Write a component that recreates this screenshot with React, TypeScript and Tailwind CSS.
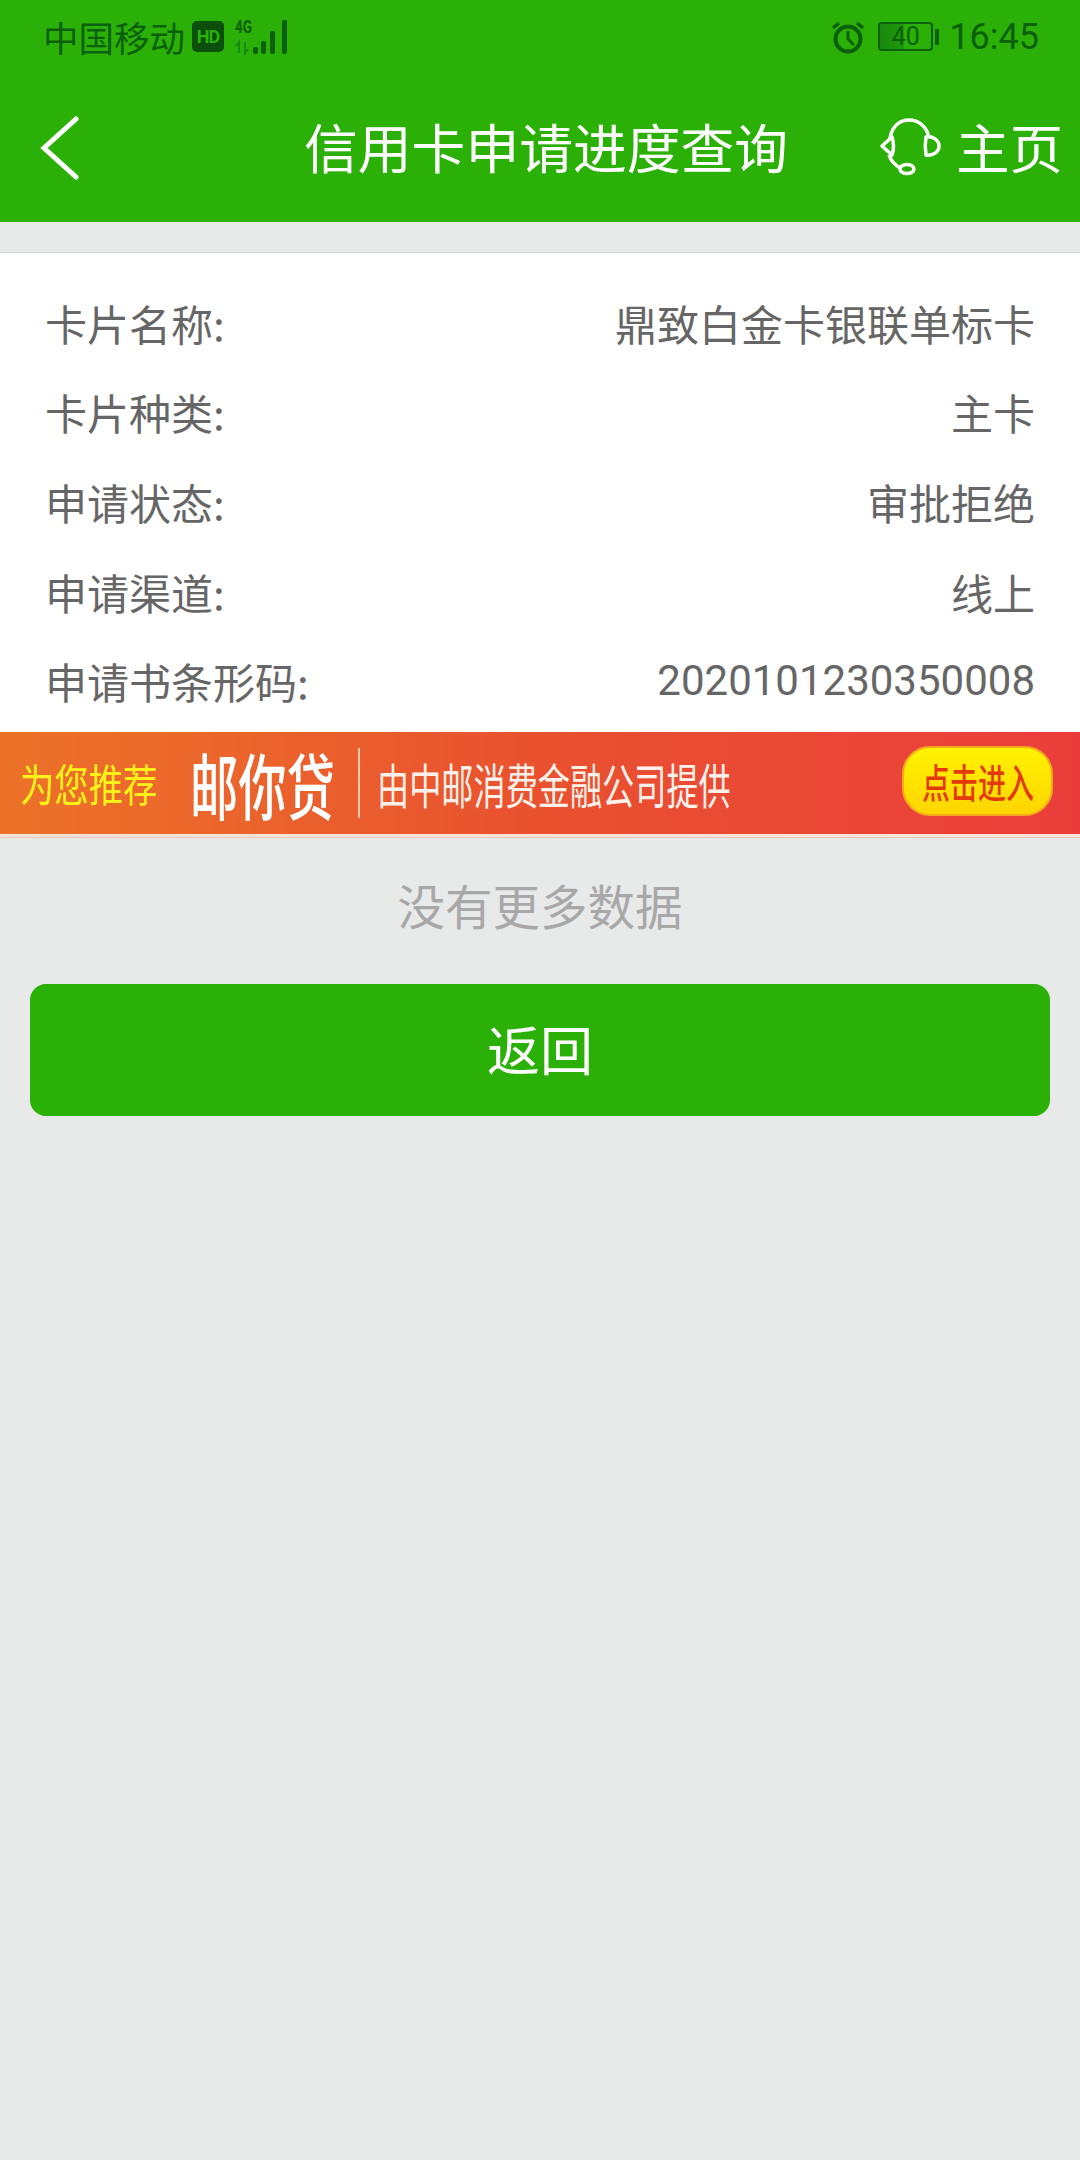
const cjk = "font-['Noto_Sans_CJK_SC','Noto_Sans',sans-serif]";

const rows = [
  ["卡片名称:", "鼎致白金卡银联单标卡"],
  ["卡片种类:", "主卡"],
  ["申请状态:", "审批拒绝"],
  ["申请渠道:", "线上"],
];

function StatusBar() {
  return (
    <div className="flex h-[73px] items-center pl-[43px] pr-[41px] text-[#0b600b]">
      <span className="w-[149px] text-[35.5px] leading-none whitespace-nowrap">中国移动</span>
      <span className="flex h-[31px] w-[32px] items-center justify-center rounded-[5px] bg-[#0c4f0c] text-[18px] leading-none font-bold text-[#2bb007] font-['Roboto',sans-serif] tracking-tighter">
        HD
      </span>
      {/* 4G + signal */}
      <svg className="ml-[10px] overflow-visible" width="54" height="36" viewBox="0 0 54 36" fill="none">
        <text x="1" y="14" fontSize="18" fontWeight="700" fill="#0b600b" fontFamily="Roboto, sans-serif" textLength="17" lengthAdjust="spacingAndGlyphs">4G</text>
        <path d="M5 34V23l-3 4M11 23v11l3-4" stroke="#148a10" strokeWidth="2" />
        <rect x="19" y="28" width="5" height="7" rx="2" fill="#0b600b" />
        <rect x="27" y="22" width="5" height="13" rx="2" fill="#0b600b" />
        <rect x="36" y="12" width="5" height="23" rx="2" fill="#0b600b" />
        <rect x="48" y="1" width="5" height="34" rx="2" fill="#0b600b" />
      </svg>
      <div className="flex-1" />
      {/* alarm */}
      <svg width="34" height="34" viewBox="0 0 34 34" fill="none" stroke="#0b600b" strokeWidth="4">
        <circle cx="17" cy="19" r="12.5" />
        <path d="M17 11v8l6 6" strokeWidth="3" />
        <path d="M2 8l6-5M32 8l-6-5" strokeWidth="3.5" />
      </svg>
      {/* battery */}
      <div className="ml-[13px] flex items-center">
        <div className="relative flex h-[29px] w-[55px] items-center justify-center overflow-hidden rounded-[4px] border-2 border-[#0b600b]">
          <div className="absolute inset-y-0 left-0 w-[24px] bg-gradient-to-r from-[#188a0e] to-[#1e9a0c]" />
          <span className="relative text-[25px] leading-none font-['Roboto',sans-serif]">40</span>
        </div>
        <div className="ml-[2px] h-[16px] w-[4px] rounded-[1px] bg-[#0b600b]" />
      </div>
      <span className="ml-[10px] text-[36px] leading-none font-['Roboto',sans-serif]">16:45</span>
    </div>
  );
}

function NavBar() {
  return (
    <div className="flex h-[149px] items-start pl-[39px] pr-[17px] text-white">
      <svg className="mt-[42px]" width="40" height="66" viewBox="0 0 40 66" fill="none" stroke="#fff" strokeWidth="5" strokeLinecap="round">
        <path d="M37 4 L5 33 L37 62" />
      </svg>
      <span className="ml-[225px] mt-[36px] text-[53.8px] leading-[74px] whitespace-nowrap">信用卡申请进度查询</span>
      <div className="flex-1" />
      {/* headset */}
      <svg className="mt-[44px]" width="62" height="60" viewBox="0 0 62 60" fill="none" stroke="#fff" strokeWidth="3.5" strokeLinejoin="round">
        <path d="M11 21C13 9 21 3 30 3s18 6 20 18" />
        <path d="M13 20 3 29l10 9c2-6 2-12 0-18Z" />
        <path d="M47 20c7-1 13 3 13 9s-6 10-13 9c-1-6-1-12 0-18Z" />
        <path d="M10 38c2 6 6 10 11 13" />
        <ellipse cx="28" cy="52" rx="7" ry="4.5" />
      </svg>
      <span className="ml-[15px] mt-[36px] text-[53.5px] leading-[74px] whitespace-nowrap">主页</span>
    </div>
  );
}

function Banner() {
  return (
    <div className="flex h-[102px] items-center bg-gradient-to-r from-[#ec7228] via-[#e9512f] to-[#ea3d3b] pl-[20px]">
      <div className="w-[170px] shrink-0 origin-left scale-x-[0.78] text-[44px] leading-none whitespace-nowrap text-[#fff21a]">
        为您推荐
      </div>
      <div className="w-[168px] shrink-0 origin-left scale-x-[0.67] text-[72px] leading-none font-medium whitespace-nowrap text-white">
        邮你贷
      </div>
      <div className="h-[70px] w-[2px] shrink-0 bg-[#f6c9a8]" />
      <div className="ml-[17px] w-[525px] shrink-0 origin-left scale-x-[0.67] text-[48px] leading-none whitespace-nowrap text-[#fff1ea]">
        由中邮消费金融公司提供
      </div>
      <div className="mb-[3px] flex h-[70px] w-[151px] shrink-0 items-center justify-center rounded-[28px] border-2 border-[#f5a81e] bg-gradient-to-b from-[#fff200] to-[#ffd500]">
        <span className="scale-x-[0.7] text-[40px] leading-none font-medium whitespace-nowrap text-[#e4390c]">点击进入</span>
      </div>
    </div>
  );
}

export default function App() {
  return (
    <div className={`h-[2160px] w-[1080px] overflow-hidden bg-[#e8eaea] ${cjk}`}>
      <div className="h-[222px] bg-[#2bb007]">
        <StatusBar />
        <NavBar />
      </div>

      <div className="mt-[30px] border-t border-[#d6d8d8] bg-white px-[45px] pt-[25px] pb-[6px]">
        {rows.map(([label, value]) => (
          <div key={label} className="flex h-[89.6px] items-center justify-between text-[42px] leading-none text-[#666666]">
            <span>{label}</span>
            <span>{value}</span>
          </div>
        ))}
        <div className="flex h-[89.6px] items-center justify-between text-[42px] leading-none text-[#666666]">
          <span>申请书条形码:</span>
          <span className="font-['Roboto',sans-serif]">2020101230350008</span>
        </div>
      </div>

      <Banner />
      <div className="h-[4px] border-t-2 border-b border-t-[#fde3d3] border-b-[#f3c0ac]" />

      <div className="mt-[35px] text-center text-[47.5px] leading-[64px] text-[#a8a8a8]">没有更多数据</div>

      <button className="mx-[30px] mt-[47px] flex h-[132px] w-[1020px] items-center justify-center rounded-[16px] bg-[#2bb007] pb-[3px] text-[53px] leading-none text-white">
        返回
      </button>
    </div>
  );
}
